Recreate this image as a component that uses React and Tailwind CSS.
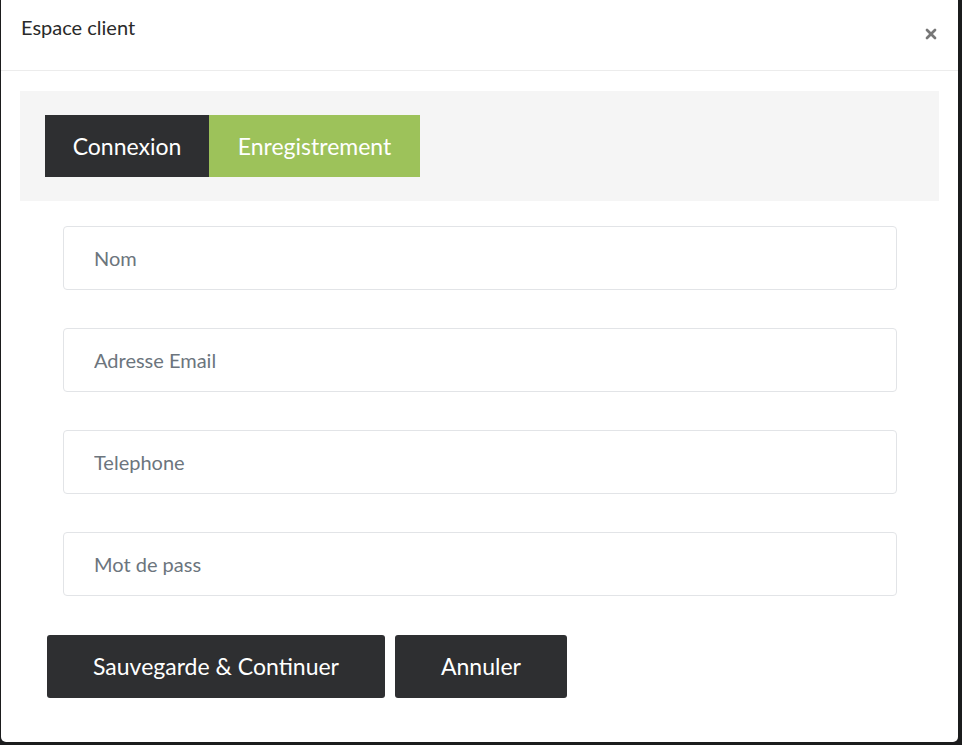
import { X } from 'lucide-react'

const fields = ['Nom', 'Adresse Email', 'Telephone', 'Mot de pass']

function App() {
  return (
    <div
      className="w-[962px] h-[745px] bg-[#1b1c1d] overflow-hidden"
      style={{ fontFamily: '"Lato", "Noto Sans", sans-serif' }}
    >
      <div className="ml-px w-[957px] h-[742px] bg-white rounded-b-[5px]">
        <header className="h-[71px] border-b border-[#ececec] flex justify-between pl-5 pr-[19px]">
          <h1 className="pt-[15px] text-[20px] leading-6 text-[#2a2a2a]">Espace client</h1>
          <button type="button" className="mt-[26px] h-[16px] text-[#777]">
            <X size={16} strokeWidth={4} />
          </button>
        </header>

        <div className="mt-5 mx-[19px] h-[110px] bg-[#f5f5f5] px-[25px] py-6 flex">
          <button
            type="button"
            className="w-[164px] h-[62px] bg-[#2e2f31] text-white text-[23px]"
          >
            Connexion
          </button>
          <button
            type="button"
            className="w-[211px] h-[62px] bg-[#9dc25a] text-white text-[23px]"
          >
            Enregistrement
          </button>
        </div>

        <form className="pl-[62px] pr-[61px] pt-[25px] flex flex-col gap-[38px]">
          {fields.map((f) => (
            <input
              key={f}
              type="text"
              placeholder={f}
              className="block h-[64px] w-full border border-[#e2e4e7] rounded-[4px] px-[30px] text-[20px] text-[#495057] placeholder:text-[#6c757d] outline-none"
            />
          ))}
        </form>

        <div className="mt-[39px] pl-[46px] flex gap-[10px]">
          <button
            type="button"
            className="w-[338px] h-[63px] rounded-[3px] bg-[#2e2f31] text-white text-[23px]"
          >
            Sauvegarde &amp; Continuer
          </button>
          <button
            type="button"
            className="w-[172px] h-[63px] rounded-[3px] bg-[#2e2f31] text-white text-[23px]"
          >
            Annuler
          </button>
        </div>
      </div>
    </div>
  )
}

export default App
